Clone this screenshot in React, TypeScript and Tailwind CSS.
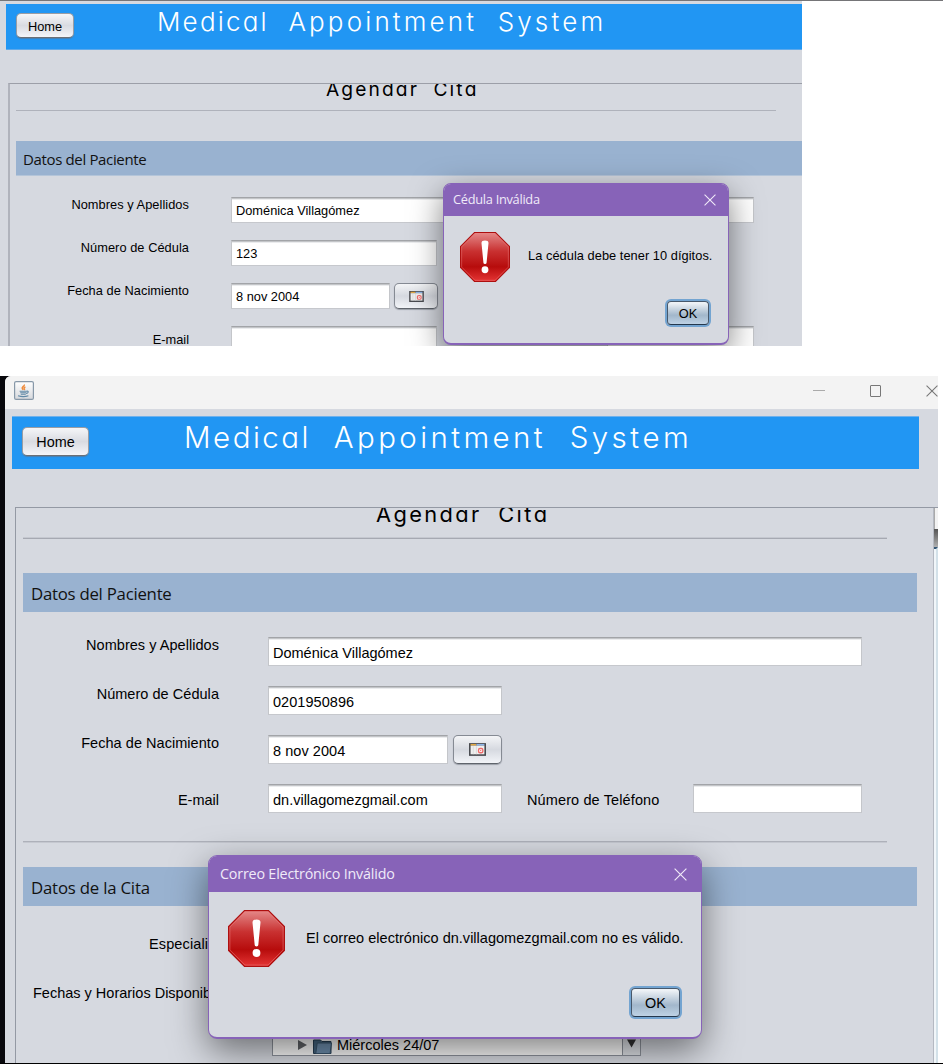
import React from "react";

const heading =
  "whitespace-pre font-['Inter',sans-serif] [font-feature-settings:'cv11','ss03'] [font-kerning:none]";
const arial = "whitespace-nowrap font-['Liberation_Sans',sans-serif] text-black";
const segoe = "whitespace-nowrap font-['Open_Sans',sans-serif]";

function Field({ className, text, children }: { className: string; text?: string; children?: React.ReactNode }) {
  return (
    <div
      className={`shrink-0 border border-t-[#a2a4a8] border-x-[#c4c6ca] border-b-[#c6c8cd] bg-white shadow-[inset_0_1px_0_#c3c5c8,inset_0_2px_0_#ebecee] ${arial} ${className}`}
    >
      {text}
      {children}
    </div>
  );
}

function CalendarButton({ className, icon }: { className: string; icon: string }) {
  return (
    <div
      className={`flex shrink-0 items-center justify-center rounded-[5px] border border-[#858a93] border-b-[#5f646c] bg-linear-to-b from-[#f4f5f7] via-[#d6d9e0] to-[#f2f4f8] shadow-[0_1px_1px_#9b9fa8] ${className}`}
    >
      <svg viewBox="0 0 16 12" className={icon}>
        <rect x="0" y="0" width="16" height="12" fill="#494b50" />
        <rect x="1.5" y=".8" width="5.5" height="1.6" fill="#e0a743" />
        <rect x="7" y=".8" width="7.5" height="1.6" fill="#8db4e6" />
        <rect x="1.5" y="2.4" width="13" height="8.1" fill="#efefef" />
        <path d="M4 3v7.5M7 3v7.5" stroke="#d5d5d5" strokeWidth=".7" />
        <rect x="9" y="5" width="4" height="4" rx="1.4" fill="#fff" stroke="#ee6a6a" strokeWidth="1.3" />
        <rect x="10.4" y="6.4" width="1.2" height="1.2" fill="#e77" />
      </svg>
    </div>
  );
}

function HomeButton({ className }: { className: string }) {
  return (
    <div
      className={`flex shrink-0 items-center justify-center rounded-[5px] border border-[#9a9da3] border-b-[#6b6f76] bg-linear-to-b from-[#f5f6f8] via-[#d9dbe1] to-[#f4f5f9] shadow-[0_1px_1px_#4b7fae] ${arial} ${className}`}
    >
      Home
    </div>
  );
}

function OkButton({ className }: { className: string }) {
  return (
    <div
      className={`flex items-center justify-center rounded-[4px] border border-[#47586b] border-b-[#24384d] bg-linear-to-b from-[#eef2f6] from-5% via-[#a2b7cb] via-60% to-[#bed2e5] shadow-[0_0_0_2px_#73a4d1] ${arial} ${className}`}
    >
      OK
    </div>
  );
}

function CloseIcon({ className }: { className: string }) {
  return (
    <svg viewBox="0 0 13 13" className={className} fill="none" stroke="currentColor" strokeWidth="1.15">
      <path d="M.6.6l11.8 11.8M12.4.6L.6 12.4" />
    </svg>
  );
}

function ErrorIcon({ className, id }: { className: string; id: string }) {
  return (
    <svg viewBox="0 0 57 57" className={className}>
      <defs>
        <linearGradient id={id} x1="0" y1="0" x2="0" y2="1">
          <stop offset="0" stopColor="#e48a8a" />
          <stop offset=".38" stopColor="#c93131" />
          <stop offset=".7" stopColor="#b70c0c" />
          <stop offset="1" stopColor="#e53535" />
        </linearGradient>
      </defs>
      <path d="M16.5.6h24L56.4 16.5v24L40.5 56.4h-24L.6 40.5v-24z" fill={`url(#${id})`} stroke="#ad0f0f" strokeWidth="1.2" />
      <path d="M17 1.9h23L55.1 17v23L40 55.1H17L1.9 40V17z" fill="none" stroke="#f08080" strokeOpacity=".5" />
      <path d="M24.5 12.4q0-2.8 4-2.8t4 2.8l-2.2 22.6q-.1 1.4-1.8 1.4t-1.8-1.4z" fill="#fff" />
      <circle cx="28.5" cy="43" r="3.9" fill="#fff" />
    </svg>
  );
}

function JavaIcon() {
  return (
    <svg viewBox="0 0 20 19" className="h-[19px] w-5">
      <defs>
        <linearGradient id="java-tile" x1="0" y1="0" x2="0" y2="1">
          <stop offset="0" stopColor="#fff" />
          <stop offset="1" stopColor="#d6d8dc" />
        </linearGradient>
      </defs>
      <rect x=".6" y=".6" width="18.8" height="17.8" rx="1.5" fill="url(#java-tile)" stroke="#8798a8" strokeWidth="1.2" />
      <path d="M10.4 3.4c.6 1.6-3 2.4-2.2 4 .3.7.8 1 1.2 1.4M11.4 5.8c-1.8 1-1.6 1.4-.9 2.2.2.4 0 .7-.4 1" fill="none" stroke="#ee8b3c" strokeWidth="1.4" />
      <path d="M5.6 10.2h7.6M6.2 11.8h6.2M6.8 13.2h5M12.6 10.2c2.4-.4 2 1.9-.6 2.3M4 14.8c2.6.8 8 .8 10.4 0" fill="none" stroke="#6189a6" strokeWidth="1.1" />
    </svg>
  );
}

function FirstWindow() {
  return (
    <section className="relative h-[345px] w-[802px] shrink-0 overflow-hidden bg-[#d6d9e0] pt-[3px]">
      <header className="ml-1.5 flex h-[46px] items-start border-b border-[#5fa9ea] bg-[#2196f3]">
        <HomeButton className="ml-[10px] mt-[9px] h-[25px] w-[58px] pt-[2px] text-[12.8px]" />
        <h1 className={`ml-[83px] text-[26px] font-light leading-[36px] tracking-[2.2px] [word-spacing:10px] text-white ${heading}`}>
          Medical <span className="tracking-[3.15px]">Appointment System</span>
        </h1>
      </header>
      <main className="ml-2 mt-[33px] h-[280px] overflow-hidden border-l-2 border-t border-l-[#b0b3bc] border-t-[#9c9fa8]">
        <h2 className={`ml-[316px] h-[10px] text-[19.2px] leading-[10px] tracking-[2.1px] [word-spacing:7px] text-black ${heading}`}>
          Agendar Cita
        </h2>
        <div className="ml-1.5 mt-4 h-px w-[760px] bg-[#afb2bb]" />
        <div className={`ml-1.5 mt-[30px] h-[35px] border-b border-[#b4c5d9] bg-[#99b2d0] pl-[7px] text-[15px] leading-[36px] tracking-[-0.35px] text-[#111] ${segoe}`}>
          Datos del Paciente
        </div>
        <div className="mt-[21px] flex flex-col text-[12.8px] leading-4">
          <div className="flex h-[43px]">
            <div className={`w-[179px] text-right tracking-[0.05px] ${arial}`}>Nombres y Apellidos</div>
            <Field className="ml-[42px] h-[26px] w-[523px] pl-1 leading-[26px]" text="Doménica Villagómez" />
          </div>
          <div className="flex h-[43px]">
            <div className={`w-[179px] text-right tracking-[0.05px] ${arial}`}>Número de Cédula</div>
            <Field className="ml-[42px] h-[26px] w-[206px] pl-1 leading-[26px]" text="123" />
          </div>
          <div className="flex h-[43px]">
            <div className={`w-[179px] text-right tracking-[0.05px] ${arial}`}>Fecha de Nacimiento</div>
            <Field className="ml-[42px] h-[26px] w-[159px] pl-1 leading-[26px]" text="8 nov 2004" />
            <CalendarButton className="ml-1 h-[26px] w-[44px]" icon="h-[11px] w-[15px]" />
          </div>
          <div className="flex h-[43px]">
            <div className={`w-[179px] text-right leading-[27px] ${arial}`}>E-mail</div>
            <Field className="ml-[42px] h-[26px] w-[206px]" />
            <Field className="ml-[170px] h-[26px] w-[147px]" />
          </div>
        </div>
      </main>
      <div className="absolute left-[443px] top-[182px] flex h-[162px] w-[286px] flex-col overflow-hidden rounded-[8px] border border-[#8763b8] border-b-2 bg-[#d6d9e0] shadow-[0_10px_32px_rgba(0,0,0,0.5)]">
        <div className="flex h-8 shrink-0 items-center justify-between bg-[#8763b8] pl-[9px] pr-3 text-[#f0eaf8]">
          <span className={`text-[12.8px] tracking-[-0.28px] ${segoe}`}>Cédula Inválida</span>
          <CloseIcon className="size-3" />
        </div>
        <div className="flex items-start pl-4 pt-4">
          <ErrorIcon id="error-small" className="size-[50px]" />
          <p className={`ml-[18px] mt-[15px] text-[12.8px] leading-[17px] tracking-[0.05px] ${arial}`}>La cédula debe tener 10 dígitos.</p>
        </div>
        <div className="mt-[19px] flex justify-end pr-[19px]">
          <OkButton className="h-6 w-[42px] pt-[2px] text-[12.8px]" />
        </div>
      </div>
    </section>
  );
}

function SecondWindow() {
  return (
    <section className="relative flex h-[687px] w-[938px] shrink-0 overflow-hidden bg-[#08080c]">
      <div className="ml-[5px] flex flex-1 flex-col overflow-hidden rounded-tl-[6px] bg-[#d6d9e0]">
        <div className="flex h-[33px] shrink-0 items-start bg-[#f3f3f3] text-[#777]">
          <div className="ml-[9px] mt-[5px]">
            <JavaIcon />
          </div>
          <div className="ml-[779px] mt-[14px] h-px w-[13px] bg-[#aaa]" />
          <div className="ml-[45px] mt-[9px] size-3 rounded-[1px] border border-[#777]" />
          <CloseIcon className="ml-[45px] mt-[9px] size-[12px] shrink-0" />
        </div>
        <header className="ml-[7px] mt-[7px] flex h-[53px] w-[907px] shrink-0 items-start border-t border-[#6fb1ec] bg-[#2196f3]">
          <HomeButton className="ml-[10px] mt-[10px] h-[29px] w-[67px] pt-[3px] text-[14.4px]" />
          <h1 className={`ml-[95px] text-[29.5px] font-light leading-[41px] tracking-[2.5px] [word-spacing:12px] text-white ${heading}`}>
            Medical <span className="tracking-[3.4px]">Appointment System</span>
          </h1>
        </header>
        <main className="ml-[10px] mt-[38px] flex flex-1 overflow-hidden border-l border-t border-[#9499a4]">
          <div className="w-[917px] shrink-0">
            <h2 className={`ml-[360px] h-[12px] text-[21.8px] leading-[12px] tracking-[2.4px] [word-spacing:8px] text-black ${heading}`}>
              Agendar Cita
            </h2>
            <div className="ml-[7px] mt-[17px] h-[2px] w-[864px] border-b border-[#a6a9b2] bg-[#c5c8d0]" />
            <div className={`ml-[7px] mt-[34px] h-[39px] w-[894px] bg-[#99b2d0] pl-2 text-[16.8px] leading-[41px] tracking-[-0.25px] text-[#111] ${segoe}`}>
              Datos del Paciente
            </div>
            <div className="mt-[25px] flex flex-col text-[14.5px] leading-[17px]">
              <div className="flex h-[49px]">
                <div className={`w-[203px] text-right tracking-[0.04px] ${arial}`}>Nombres y Apellidos</div>
                <Field className="ml-[49px] h-[29px] w-[594px] pl-1 leading-[30px]" text="Doménica Villagómez" />
              </div>
              <div className="flex h-[49px]">
                <div className={`w-[203px] text-right tracking-[0.04px] ${arial}`}>Número de Cédula</div>
                <Field className="ml-[49px] h-[29px] w-[234px] pl-1 leading-[30px] tracking-[0.06px]" text="0201950896" />
              </div>
              <div className="flex h-[49px]">
                <div className={`w-[203px] text-right tracking-[0.04px] ${arial}`}>Fecha de Nacimiento</div>
                <Field className="ml-[49px] h-[29px] w-[180px] pl-1 leading-[30px] tracking-[0.06px]" text="8 nov 2004" />
                <CalendarButton className="ml-[5px] h-[29px] w-[49px]" icon="h-[13px] w-[17px]" />
              </div>
              <div className="flex h-[49px]">
                <div className={`w-[203px] text-right leading-[32px] ${arial}`}>E-mail</div>
                <Field className="ml-[49px] h-[29px] w-[234px] pl-1 leading-[30px]" text="dn.villagomezgmail.com" />
                <div className={`ml-[25px] w-[133px] leading-[32px] tracking-[0.12px] ${arial}`}>Número de Teléfono</div>
                <Field className="ml-[33px] h-[29px] w-[169px]" />
              </div>
            </div>
            <div className="ml-[7px] mt-[8px] h-[2px] w-[864px] border-t border-[#aeb1ba] bg-[#c5c8d0]" />
            <div className={`ml-[7px] mt-[24px] h-[39px] w-[894px] bg-[#99b2d0] pl-2 text-[16.8px] leading-[41px] tracking-[-0.2px] text-[#111] ${segoe}`}>
              Datos de la Cita
            </div>
            <div className="mt-[29px] flex flex-col text-[14.5px] leading-[18px]">
              <div className={`h-[49px] pl-[133px] tracking-[0.12px] ${arial}`}>Especialidad</div>
              <div className={`h-[49px] pl-[17px] ${arial}`}>Fechas y Horarios Disponibles</div>
            </div>
            <div className="ml-[256px] mt-[1px] flex h-[22px] w-[369px] border border-[#8f949d] bg-white">
              <div className="flex flex-1 items-center pl-[25px] pt-[2px]">
                <svg viewBox="0 0 9 10" className="mb-[3px] h-[10px] w-[9px]">
                  <path d="M0 0l9 5-9 5z" fill="#626469" />
                </svg>
                <svg viewBox="0 0 19 15" className="ml-[6px] h-[15px] w-[19px]">
                  <path d="M.5 14.5V1h7l1.5 1.5h9v12z" fill="#456783" stroke="#263e54" />
                  <path d="M2.8 14.5L4.2 4h14.3l-1.4 10.5z" fill="#6f90b0" stroke="#3b5770" />
                </svg>
                <span className={`ml-[5px] text-[14.5px] ${arial}`}>Miércoles 24/07</span>
              </div>
              <div className="flex w-[18px] justify-center border-l border-[#8f949d] bg-[#e2e5ea] pt-[4px]">
                <svg viewBox="0 0 10 9" className="h-[9px] w-[9px]">
                  <path d="M0 0h10L5 9z" fill="#333" />
                </svg>
              </div>
            </div>
          </div>
          <div className="flex flex-1 flex-col border-l border-[#b5b9c2]">
            <div className="h-[21px] border-l border-[#aaa] bg-[#f2f2f2]" />
            <div className="h-[18px] bg-linear-to-b from-[#555] to-[#b0b0b0]" />
            <div className="flex-1 border-t-2 border-t-[#365876] border-r-2 border-r-[#d3e1e9] bg-[#f1f6f9]" />
          </div>
        </main>
      </div>
      <div className="absolute left-[208px] top-[479px] flex h-[184px] w-[494px] flex-col overflow-hidden rounded-[9px] border border-[#8763b8] border-b-2 bg-[#d6d9e0] shadow-[0_12px_36px_rgba(0,0,0,0.5)]">
        <div className="flex h-9 shrink-0 items-center justify-between bg-[#8763b8] pl-[11px] pr-[14px] text-[#f0eaf8]">
          <span className={`text-[14.3px] tracking-[-0.18px] ${segoe}`}>Correo Electrónico Inválido</span>
          <CloseIcon className="size-[13px]" />
        </div>
        <div className="flex items-start pl-[19px] pt-[18px]">
          <ErrorIcon id="error-large" className="size-[57px]" />
          <p className={`ml-[21px] mt-[19px] text-[14.5px] leading-[19px] tracking-[0.02px] ${arial}`}>
            El correo electrónico dn.villagomezgmail.com no es válido.
          </p>
        </div>
        <div className="mt-[21px] flex justify-end pr-[21px]">
          <OkButton className="h-[29px] w-[49px] pt-[3px] text-[14.4px]" />
        </div>
      </div>
    </section>
  );
}

export default function App() {
  return (
    <div className="flex h-[1064px] w-[943px] flex-col overflow-hidden bg-white">
      <div className="h-px shrink-0 bg-[#757578]" />
      <FirstWindow />
      <div className="h-[30px] shrink-0" />
      <SecondWindow />
      <div className="h-px shrink-0 bg-black" />
    </div>
  );
}
